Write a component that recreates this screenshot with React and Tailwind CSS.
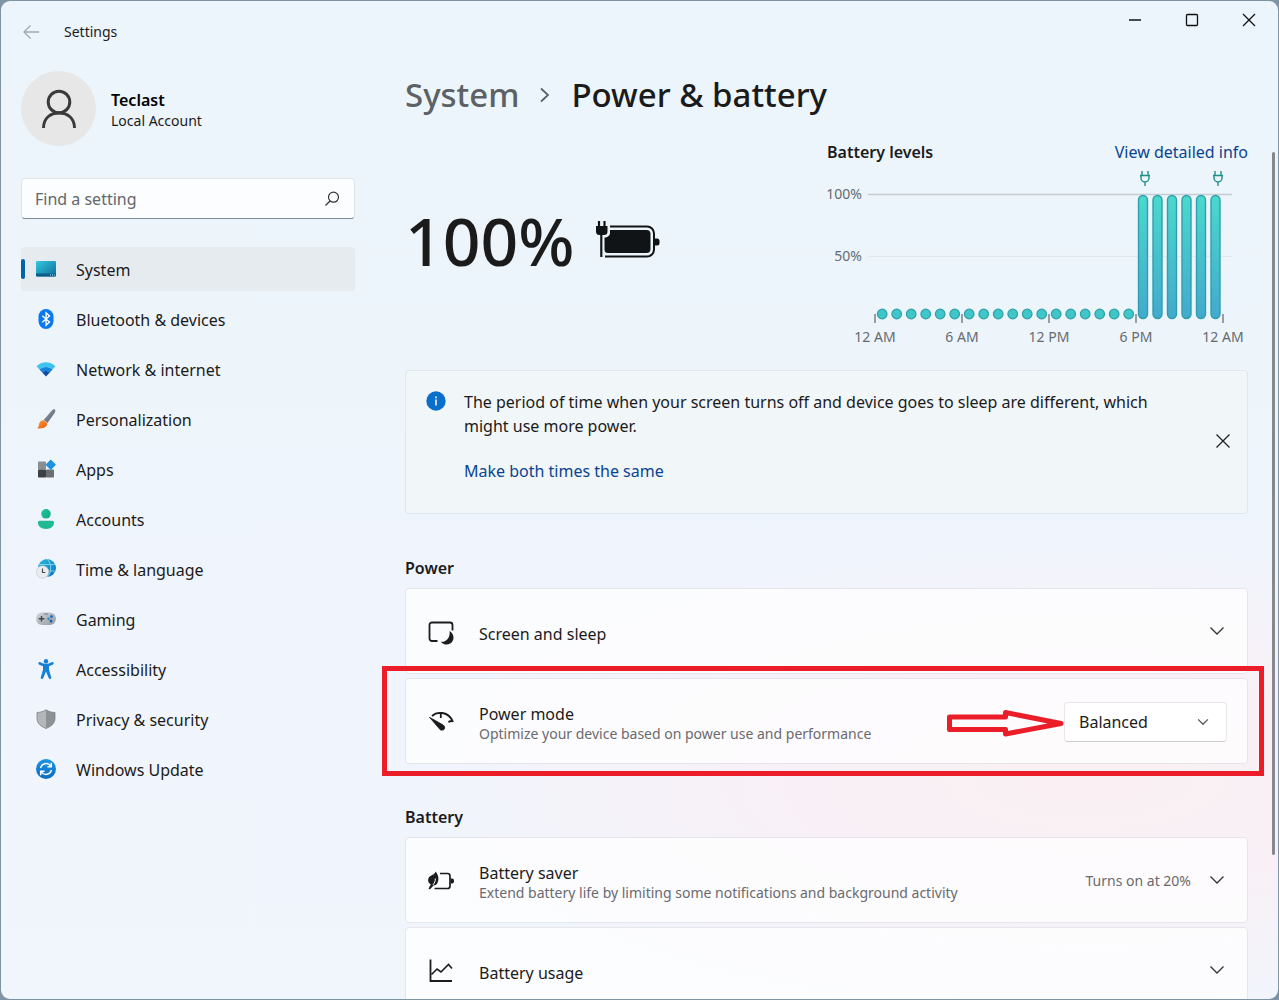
import React from "react";

const svg = (children, props = {}) => (
  <svg viewBox="0 0 20 20" className="size-5 shrink-0" fill="none" aria-hidden="true" {...props}>
    {children}
  </svg>
);

const grad = (id, from, to, diag = true) => (
  <linearGradient id={id} x1="0" y1="0" x2={diag ? "1" : "0"} y2="1">
    <stop offset="0" stopColor={from} />
    <stop offset="1" stopColor={to} />
  </linearGradient>
);

const icons = {
  system: svg(
    <>
      <defs>{grad("sys", "#35c8e0", "#0a6d99")}</defs>
      <rect x="0" y="2" width="20" height="15.5" rx="1.2" fill="url(#sys)" />
      <path d="M0 14.5h20v1.8a1.2 1.2 0 0 1-1.2 1.2H1.2A1.2 1.2 0 0 1 0 16.300z" fill="#0b5c86" />
      <path d="M14 16h1M16 16h1M18 16h1" stroke="#bfe6f5" strokeWidth="1" />
    </>
  ),
  bluetooth: svg(
    <>
      <rect x="2.500" y="0" width="15" height="20" rx="7.500" fill="#0a78f0" />
      <path d="M6.300 6.800l7.200 6.200-3.400 3.200V3.800l3.400 3.200-7.200 6.200" stroke="#fff" strokeWidth="1.400" />
    </>
  ),
  network: svg(
    <>
      <path d="M.6 7.300C6 2 14 2 19.400 7.300l-2.900 3.200C12.800 7 7.200 7 3.500 10.500z" fill="#3cc3ee" />
      <path d="M3.500 10.500C7.200 7 12.800 7 16.500 10.500l-2.700 2.900c-2.200-2-5.400-2-7.600 0z" fill="#1583d8" />
      <path d="M6.200 13.400c2.200-2 5.400-2 7.600 0L10 17.600z" fill="#0c4fa8" />
    </>
  ),
  personalization: svg(
    <>
      <defs>
        {grad("brush", "#8f98a2", "#5c6670")}
        {grad("tip", "#ff9a3c", "#ea5d0c")}
      </defs>
      <path d="M18.800.6c1 .8.500 2.200-.2 3.300L11.500 14 7.600 11l8-9.200C16.500.7 17.800-.1 18.800.6z" fill="url(#brush)" />
      <path d="M7.300 11.200l3.700 2.900c.5 3.600-3.200 6.100-10 5.100 1.800-.8 1.500-2.200 2-4.200.600-2.300 2.300-3.800 4.300-3.800z" fill="url(#tip)" />
    </>
  ),
  apps: svg(
    <>
      <rect x="2" y="2.500" width="8" height="8" rx=".8" fill="#8a8d91" />
      <rect x="2" y="10.500" width="8" height="8" rx=".8" fill="#3d4044" />
      <rect x="10" y="10.500" width="8" height="8" rx=".8" fill="#6b6e72" />
      <rect x="11" y="2" width="7.500" height="7.500" rx=".8" transform="rotate(45 14.75 5.750)" fill="#1c93dc" />
    </>
  ),
  accounts: svg(
    <>
      <defs>{grad("acc", "#1fc3a0", "#14a884")}</defs>
      <circle cx="10" cy="4.800" r="4.800" fill="url(#acc)" />
      <path d="M3.800 11.800h12.400c1 0 1.800.7 1.800 1.800 0 4-3.400 6.400-8 6.400s-8-2.400-8-6.400c0-1.100.8-1.800 1.800-1.800z" fill="#20b996" />
    </>
  ),
  time: svg(
    <>
      <defs>{grad("globe", "#2bb9d6", "#0c72c8")}</defs>
      <circle cx="11" cy="9" r="9" fill="url(#globe)" />
      <path d="M11 0c5 4.500 5 13.500 0 18M3 5.500h16M11 12h8.500" stroke="#8fe0ef" strokeWidth=".8" />
      <circle cx="6.500" cy="13" r="6.200" fill="#e9ebee" stroke="#c3c7cc" strokeWidth=".6" />
      <path d="M6.500 9.500V13.500H9.300" stroke="#4a4e54" strokeWidth="1.200" />
    </>
  ),
  gaming: svg(
    <>
      <defs>{grad("pad", "#cfd5da", "#959ca4")}</defs>
      <rect x="0" y="3.500" width="20" height="12.500" rx="6.200" fill="url(#pad)" />
      <path d="M5.500 7v5.500M2.800 9.800h5.500" stroke="#42474d" strokeWidth="1.400" />
      <circle cx="15.500" cy="7.500" r="1.500" fill="#1672bd" />
      <circle cx="12.500" cy="9.800" r="1.300" fill="#3689c9" />
      <circle cx="15" cy="12" r="1.500" fill="#1b66a8" />
      <path d="M8 5h4" stroke="#6a7077" strokeWidth=".8" />
    </>
  ),
  accessibility: svg(
    <>
      <circle cx="10" cy="2.200" r="2.200" fill="#1481d6" />
      <path
        d="M2.400 3.800c.4-.9 1.200-.9 2-.5 3.600 2 7.600 2 11.200 0 .8-.4 1.600-.4 2 .5.300.9-.1 1.500-.9 1.900L13 7.200v3.500l2.200 7.500c.2.900-.1 1.500-.8 1.700-.8.200-1.400-.2-1.700-.9L10 12.600 7.300 19c-.3.700-.9 1.100-1.700.9-.7-.2-1-.8-.8-1.700L7 10.700V7.200L3.300 5.700c-.8-.4-1.200-1-.9-1.900z"
        fill="#1481d6"
      />
    </>
  ),
  privacy: svg(
    <>
      <path d="M10 .8c2.800 1.800 5.500 2.600 9 2.700v6c0 4.700-3.500 7.700-9 10z" fill="#8e9296" />
      <path d="M10 .8C7.200 2.600 4.500 3.400 1 3.500v6c0 4.700 3.500 7.700 9 10z" fill="#b3b7ba" />
      <path d="M10 .8c2.800 1.800 5.500 2.600 9 2.700v6c0 4.700-3.500 7.700-9 10-5.500-2.300-9-5.300-9-10v-6C4.500 3.400 7.200 2.600 10 .8z" stroke="#7b7f83" strokeWidth=".8" />
    </>
  ),
  update: svg(
    <>
      <defs>{grad("upd", "#1b95e4", "#0a6cc2", false)}</defs>
      <circle cx="10" cy="10" r="10" fill="url(#upd)" />
      <path d="M4.600 9A5.600 5.600 0 0 1 14.800 7.200M15.400 11A5.600 5.600 0 0 1 5.200 12.800" stroke="#fff" strokeWidth="1.500" />
      <path d="M15.300 3.800v3.900h-3.900M4.700 16.200v-3.900h3.900" stroke="#fff" strokeWidth="1.500" />
    </>
  ),
};

const nav = [
  ["system", "System"],
  ["bluetooth", "Bluetooth & devices"],
  ["network", "Network & internet"],
  ["personalization", "Personalization"],
  ["apps", "Apps"],
  ["accounts", "Accounts"],
  ["time", "Time & language"],
  ["gaming", "Gaming"],
  ["accessibility", "Accessibility"],
  ["privacy", "Privacy & security"],
  ["update", "Windows Update"],
];

function Chevron({ small }) {
  return (
    <svg viewBox="0 0 16 16" className={small ? "h-3 w-3" : "size-4"} fill="none" stroke={small ? "#555" : "#333"} strokeWidth={small ? "1.700" : "1.300"} aria-hidden="true">
      <path d="M1.500 4.500L8 11l6.500-6.500" />
    </svg>
  );
}

function TitleBar() {
  return (
    <header className="flex h-[61px] items-start justify-between">
      <div className="flex items-center gap-[23px] pt-5 pl-5">
        <button type="button" aria-label="Back">
          <svg viewBox="0 0 20 20" className="size-5" fill="none" stroke="#a3a9ae" strokeWidth="1.300">
            <path d="M18 10H3M9.500 3.500L3 10l6.500 6.500" />
          </svg>
        </button>
        <h1 className="text-sm leading-[22px]">Settings</h1>
      </div>
      <div className="flex">
        <button type="button" aria-label="Minimize" className="grid h-[38px] w-[57px] place-items-center">
          <svg viewBox="0 0 14 14" className="size-3.5" stroke="#111" strokeWidth="1.300"><path d="M1 7h12" /></svg>
        </button>
        <button type="button" aria-label="Maximize" className="grid h-[38px] w-[57px] place-items-center">
          <svg viewBox="0 0 14 14" className="size-3.5" fill="none" stroke="#111" strokeWidth="1.300"><rect x="1.500" y="1.500" width="11" height="11" rx="1" /></svg>
        </button>
        <button type="button" aria-label="Close" className="grid h-[38px] w-[58px] place-items-center">
          <svg viewBox="0 0 14 14" className="size-3.5" stroke="#111" strokeWidth="1.300"><path d="M1 1l12 12M13 1L1 13" /></svg>
        </button>
      </div>
    </header>
  );
}

function Sidebar() {
  return (
    <aside className="w-[354px] shrink-0 pt-[9px] pl-5">
      <div className="flex items-center gap-[15px]">
        <div className="grid size-[75px] shrink-0 place-items-center rounded-full bg-[#e7e7e8]">
          <svg viewBox="0 0 36 40" className="h-10 w-9" fill="none" stroke="#3a3a3a" strokeWidth="3" aria-hidden="true">
            <circle cx="18" cy="13" r="10.800" />
            <path d="M2.500 39C2.500 29 9.500 24 18 24s15.500 5 15.500 15" />
          </svg>
        </div>
        <div className="pt-0.5">
          <p className="text-base leading-[22px] font-semibold text-black">Teclast</p>
          <p className="text-sm leading-5">Local Account</p>
        </div>
      </div>
      <label className="mt-8 flex h-[41px] items-center rounded border border-b-[#7f8b93] border-[#dde4e9] bg-[#fbfdfe] pr-3.5 pl-[13px]">
        <input type="search" aria-label="Find a setting" placeholder="Find a setting" className="min-w-0 flex-1 bg-transparent text-base outline-none placeholder:text-[#62676b]" />
        <svg viewBox="0 0 16 16" className="size-4" fill="none" stroke="#333" strokeWidth="1.200" aria-hidden="true">
          <circle cx="9.500" cy="6.200" r="5" />
          <path d="M6 10L1.500 14.500" />
        </svg>
      </label>
      <nav aria-label="Settings" className="mt-7">
        <ul className="flex flex-col gap-1.5">
          {nav.map(([id, label], i) => (
            <li key={id}>
              <a
                href={"#" + id}
                aria-current={i === 0 ? "page" : undefined}
                className={i === 0 ? "flex h-11 items-center rounded bg-[#e6ebef]" : "flex h-11 items-center rounded"}
              >
                <span className={i === 0 ? "h-5 w-[4px] rounded-full bg-[#0563a8]" : "h-5 w-[4px]"} />
                <span className="mr-5 ml-[11px]">{icons[id]}</span>
                <span className="pt-0.5 text-base">{label}</span>
              </a>
            </li>
          ))}
        </ul>
      </nav>
    </aside>
  );
}

const ticks = [
  [875, "12 AM"],
  [962, "6 AM"],
  [1049, "12 PM"],
  [1136, "6 PM"],
  [1223, "12 AM"],
];

function Plug({ x }) {
  return (
    <path
      transform={`translate(${x} 170)`}
      d="M-3 1v4M3 1v4M-5 5.500h10M-4 5.500v2.500a4 4 0 0 0 8 0V5.500M0 12v4"
      stroke="#1c8f8c"
      strokeWidth="1.400"
      fill="none"
    />
  );
}

function BatteryChart() {
  return (
    <section aria-label="Battery levels" className="w-[421px] shrink-0">
      <div className="flex items-center justify-between text-base leading-6">
        <h3 className="font-semibold">Battery levels</h3>
        <a href="#details" className="text-[#0a4490]">View detailed info</a>
      </div>
      <svg viewBox="827 164 421 184" className="block h-[184px] w-[421px] overflow-visible" role="img" aria-label="Battery level for each hour">
        <defs>{grad("bar", "#4ad9cc", "#43a9cd", false)}</defs>
        <path d="M868 194.500h364" stroke="#c6cdd2" strokeWidth="1.500" />
        <path d="M868 256.500h364" stroke="#e1e8ed" />
        <g fill="#666b70" fontSize="14" textAnchor="end">
          <text x="862" y="199">100%</text>
          <text x="862" y="261">50%</text>
        </g>
        {Array.from({ length: 18 }, (_, i) => (
          <circle key={i} cx={882.200 + i * 14.500} cy="314" r="4.800" fill="#3fc6c8" stroke="#2f9fa6" strokeWidth="1.200" />
        ))}
        {Array.from({ length: 6 }, (_, i) => (
          <rect key={i} x={1138.500 + i * 14.500} y="195.500" width="9" height="123" rx="4.500" fill="url(#bar)" stroke="#2f9fae" strokeWidth="1.400" />
        ))}
        <Plug x={1145} />
        <Plug x={1218} />
        {ticks.map(([x, label]) => (
          <g key={x}>
            <path d={`M${x} 314v9`} stroke="#6b7176" strokeWidth="1.300" />
            <text x={x} y="342" fill="#666b70" fontSize="14" textAnchor="middle">{label}</text>
          </g>
        ))}
      </svg>
    </section>
  );
}

function BatteryIcon() {
  return (
    <svg viewBox="0 0 66 40" className="h-10 w-[66px]" fill="none" aria-hidden="true">
      <path d="M15 6.500h37a7 7 0 0 1 7 7v16a7 7 0 0 1-7 7H10" stroke="#111416" strokeWidth="2" />
      <path d="M15 10h36.500a4 4 0 0 1 4 4v15a4 4 0 0 1-4 4H13a3.500 3.500 0 0 1-3.500-3.500V17.500c3 0 5.500-2 5.500-4.500z" fill="#111416" />
      <path d="M60 18.500h2a2.500 2.500 0 0 1 2.500 2.500v2a2.500 2.500 0 0 1-2.500 2.500H60z" fill="#111416" />
      <path d="M4 1v6M9.500 1v6" stroke="#111416" strokeWidth="2.200" />
      <path d="M1 6h11.500v5.500a3.500 3.500 0 0 1-3.500 3.500H4.500A3.500 3.500 0 0 1 1 11.500z" fill="#111416" />
      <path d="M6.300 14v23" stroke="#111416" strokeWidth="2.200" />
    </svg>
  );
}

function Card({ icon, title, detail, children }) {
  return (
    <div className="flex h-[86px] items-center rounded border border-[#e6e5ec] bg-white/75 pr-[22px] pl-[21px]">
      <svg viewBox="0 0 28 28" className="size-7 shrink-0" fill="none" stroke="#1c1c1c" strokeWidth="1.800" aria-hidden="true">
        {icon}
      </svg>
      <div className="mt-1.5 ml-6 min-w-0 flex-1">
        <p className="text-base leading-5">{title}</p>
        {detail && <p className="text-sm leading-5 text-[#6a6a6e]">{detail}</p>}
      </div>
      {children}
    </div>
  );
}

const cardIcons = {
  screen: (
    <>
      <path d="M10.500 24H5A2.500 2.500 0 0 1 2.500 21.500V8A2.500 2.500 0 0 1 5 5.500h18A2.500 2.500 0 0 1 25.500 8v5.500" />
      <path d="M22.500 14c5 3 5.300 9.500 1 12.200-3.200 2.200-7.300 1.600-9.500-1.500 5.500.5 9.500-4.500 8.500-10.700z" fill="#1c1c1c" stroke="none" />
    </>
  ),
  mode: (
    <>
      <path d="M5 9C9.500 4.500 21.500 3.500 26 15M13.800 6v5M26 14.500c-1.500-.8-3-.6-4.500.7" strokeWidth="1.800" />
      <path d="M2.500 10.300L16.200 18c3.300 2.500.7 6.600-3 4.700z" fill="#1c1c1c" stroke="#1c1c1c" strokeWidth=".8" strokeLinejoin="round" />
    </>
  ),
  saver: (
    <>
      <path d="M13 7.500h7.500A2.500 2.500 0 0 1 23 10v10a2.500 2.500 0 0 1-2.500 2.500H7.500" strokeWidth="1.700" />
      <path d="M23.500 12.500H25a2 2 0 0 1 2 2v1a2 2 0 0 1-2 2h-1.500z" fill="#1c1c1c" stroke="none" />
      <path d="M8.700 5.500c2.800 3.500 3.800 8.800 1.300 12.200-.8 1-1.800 1.500-3.200 1.600L2.800 23.500l-1.300-1 2.300-4C.2 16 .3 12 3.500 10 6 8.500 7.800 8 8.700 5.500z" fill="#1c1c1c" stroke="none" />
      <path d="M8.300 12.500c.2 2.500-.8 4.500-2.500 6.500" stroke="#fff" strokeWidth="1" />
    </>
  ),
  usage: (
    <>
      <path d="M3.500 3.500V25H25" />
      <path d="M4.500 18.500l5.500-5.500 4 3 7.500-7.500 3.500 4" strokeWidth="1.600" />
    </>
  ),
};

export default function App() {
  return (
    <div className="h-screen bg-[#7f94a3] p-px font-['Noto_Sans','Open_Sans',sans-serif] text-[#1b1b1b]">
      <div className="flex h-full flex-col overflow-hidden rounded-[9px] bg-[radial-gradient(ellipse_52%_24%_at_85%_78%,#faf0f3_0%,#f8f0f6_45%,transparent_100%),linear-gradient(to_bottom,#ecf5fb_0%,#edf5fb_40%,#f0f4fc_60%,#f1f5fc_100%)]">
        <TitleBar />
        <div className="flex min-h-0 flex-1">
          <Sidebar />
          <main className="flex min-w-0 flex-1 flex-col">
            <h2 className="flex items-center pl-[50px] text-[33px] leading-[66px] font-medium">
              <a href="#system" className="text-[#5c6165]">System</a>
              <svg viewBox="0 0 12 16" className="mx-5 h-4 w-3" fill="none" stroke="#5c6165" strokeWidth="1.800" aria-hidden="true">
                <path d="M2 1.500L9 8l-7 6.500" />
              </svg>
              <span>Power &amp; battery</span>
            </h2>
            <div className="flex min-h-0 flex-1 overflow-hidden">
              <div className="min-w-0 flex-1 pt-3 pl-[50px]">
                <div className="flex justify-between">
                  <div className="flex items-center gap-5 pb-2">
                    <p className="text-[66px] leading-none font-medium">100%</p>
                    <BatteryIcon />
                  </div>
                  <BatteryChart />
                </div>

                <section className="mt-[22px] flex h-36 items-start rounded border border-[#dfe7ec] bg-[#f1f6f9] pl-5">
                  <svg viewBox="0 0 20 20" className="mt-5 size-5 shrink-0" aria-hidden="true">
                    <circle cx="10" cy="10" r="9.700" fill="#0a6fcb" />
                    <path d="M10 8.500v6M10 5.500v1.700" stroke="#fff" strokeWidth="1.500" />
                  </svg>
                  <div className="mt-[19px] ml-[18px] flex-1 text-base leading-6">
                    <p className="max-w-[720px]">The period of time when your screen turns off and device goes to sleep are different, which might use more power.</p>
                    <a href="#sleep" className="mt-[21px] inline-block text-[#0a4490]">Make both times the same</a>
                  </div>
                  <button type="button" aria-label="Dismiss" className="mr-4 mb-0.5 self-center">
                    <svg viewBox="0 0 16 16" className="size-4" stroke="#222" strokeWidth="1.300"><path d="M1.500 1.500l13 13M14.500 1.500l-13 13" /></svg>
                  </button>
                </section>

                <h3 className="mt-[42px] mb-2 text-base leading-6 font-semibold">Power</h3>
                <div className="flex flex-col gap-1">
                  <Card icon={cardIcons.screen} title="Screen and sleep">
                    <button type="button" aria-label="Expand screen and sleep"><Chevron /></button>
                  </Card>
                  <div className="relative">
                    <Card icon={cardIcons.mode} title="Power mode" detail="Optimize your device based on power use and performance">
                      <div className="relative mt-0.5 -mr-0.5 shrink-0">
                        <select aria-label="Power mode" className="block h-10 w-[163px] appearance-none rounded border border-[#e8e6ea] border-b-[#cfcdd2] bg-white pl-3.5 text-base">
                          <option>Balanced</option>
                        </select>
                        <span className="pointer-events-none absolute inset-y-0 right-[18px] flex items-center"><Chevron small /></span>
                        <svg viewBox="0 0 119 30" className="pointer-events-none absolute top-1.5 right-full h-[30px] w-[119px]" fill="none" stroke="#ea1d29" strokeWidth="5" strokeLinejoin="round" aria-hidden="true">
                          <path d="M4.500 9h56V4.500L116 15.500 60.500 26v-4.500h-56z" />
                        </svg>
                      </div>
                    </Card>
                    <div className="pointer-events-none absolute -top-3 -right-4 -bottom-3 -left-[23px] border-5 border-[#ea1d29]" />
                  </div>
                </div>

                <h3 className="mt-[41px] mb-2 text-base leading-6 font-semibold">Battery</h3>
                <div className="flex flex-col gap-1">
                  <Card icon={cardIcons.saver} title="Battery saver" detail="Extend battery life by limiting some notifications and background activity">
                    <span className="mt-0.5 mr-[18px] text-sm text-[#6a6a6e]">Turns on at 20%</span>
                    <button type="button" aria-label="Expand battery saver"><Chevron /></button>
                  </Card>
                  <Card icon={cardIcons.usage} title="Battery usage">
                    <button type="button" aria-label="Expand battery usage"><Chevron /></button>
                  </Card>
                </div>
              </div>
              <div className="flex w-[30px] shrink-0 justify-end pt-6 pr-[3px]">
                <div className="h-[83%] w-[3px] rounded-full bg-[#85898c]" />
              </div>
            </div>
          </main>
        </div>
      </div>
    </div>
  );
}
